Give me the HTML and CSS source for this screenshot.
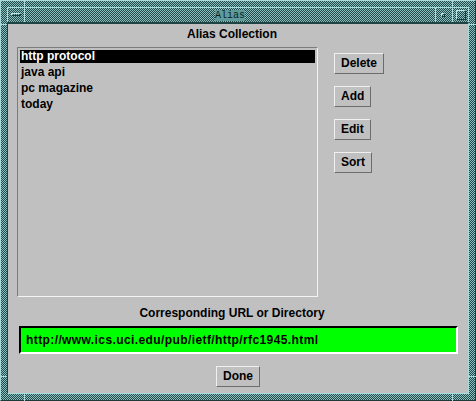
FILE: index.html
```html
<!DOCTYPE html>
<html>
<head>
<meta charset="utf-8">
<title>Alias</title>
<link rel="stylesheet" href="styles.css">
</head>
<body>
<div class="window">
  <div class="titlebar">
    <div class="tb-menu"><span class="menu-glyph"></span></div>
    <div class="tb-title"><span class="title-label">Alias</span></div>
    <div class="tb-min"><span class="min-glyph"></span></div>
    <div class="tb-max"><span class="max-glyph"></span></div>
  </div>
  <div class="client">
    <div class="heading">Alias Collection</div>
    <div class="main">
      <div class="list">
        <div class="item selected">http protocol</div>
        <div class="item">java api</div>
        <div class="item">pc magazine</div>
        <div class="item">today</div>
      </div>
      <div class="buttons">
        <button class="btn">Delete</button>
        <button class="btn">Add</button>
        <button class="btn">Edit</button>
        <button class="btn">Sort</button>
      </div>
    </div>
    <div class="heading url-heading">Corresponding URL or Directory</div>
    <div class="field">http://www.ics.uci.edu/pub/ietf/http/rfc1945.html</div>
    <div class="footer"><button class="btn">Done</button></div>
  </div>
  <span class="tick tick-v tl-v"></span>
  <span class="tick tick-v tr-v"></span>
  <span class="tick tick-h tl-h"></span>
  <span class="tick tick-h tr-h"></span>
  <span class="tick tick-v bl-v"></span>
  <span class="tick tick-v br-v"></span>
  <span class="tick tick-h bl-h"></span>
  <span class="tick tick-h br-h"></span>
</div>
</body>
</html>
```
FILE: styles.css
```css
html, body {
  margin: 0;
  padding: 0;
  background: #c0c0c0;
}

.window {
  position: relative;
  box-sizing: border-box;
  width: 476px;
  height: 401px;
  padding: 6px;
  border-top: 1px solid #a8dcdc;
  border-left: 1px solid #a8dcdc;
  border-right: 1px solid #1c3c3c;
  border-bottom: 1px solid #1c3c3c;
  background-color: #4f8080;
  background-image: repeating-conic-gradient(#21494a 0% 25%, #8cc0c0 0% 50%);
  background-size: 2px 2px;
  display: flex;
  flex-direction: column;
}

/* ---------- title bar ---------- */
.titlebar {
  height: 15px;
  display: flex;
  box-sizing: border-box;
  border-top: 1px solid #a8dcdc;
}

.tb-menu, .tb-title, .tb-min, .tb-max {
  box-sizing: border-box;
  border-left: 1px solid #a8dcdc;
  position: relative;
}

.tb-menu { width: 17px; }
.tb-title {
  flex: 1;
  display: flex;
  justify-content: center;
  align-items: center;
}
.tb-min { width: 17px; }
.tb-max { width: 17px; border-right: 1px solid #a8dcdc; }

.menu-glyph {
  position: absolute;
  left: 3px;
  top: 5px;
  width: 10px;
  height: 3px;
  box-sizing: border-box;
  border-top: 1px solid #b8e8e8;
  border-left: 1px solid #b8e8e8;
  border-right: 1px solid #1c3c3c;
  border-bottom: 1px solid #1c3c3c;
}

.min-glyph {
  position: absolute;
  left: 5px;
  top: 5px;
  width: 4px;
  height: 4px;
  box-sizing: border-box;
  border-top: 1px solid #b8e8e8;
  border-left: 1px solid #b8e8e8;
  border-right: 1px solid #1c3c3c;
  border-bottom: 1px solid #1c3c3c;
}

.max-glyph {
  position: absolute;
  left: 3px;
  top: 2px;
  width: 10px;
  height: 10px;
  box-sizing: border-box;
  border-top: 1px solid #b8e8e8;
  border-left: 1px solid #b8e8e8;
  border-right: 1px solid #1c3c3c;
  border-bottom: 1px solid #1c3c3c;
}

.title-label {
  font-family: "Liberation Mono", "DejaVu Sans Mono", monospace;
  font-size: 10px;
  line-height: 11px;
  height: 11px;
  background: #5e9c9c;
  color: #0c2224;
  margin-top: 1px;
}

/* ---------- client area ---------- */
.client {
  flex: 1;
  box-sizing: border-box;
  background: #c0c0c0;
  border-top: 2px solid #1e4444;
  border-left: 1px solid #1e4444;
  border-right: 1px solid #a8dcdc;
  border-bottom: 1px solid #a8dcdc;
  font-family: "Liberation Sans", Arial, sans-serif;
  font-weight: bold;
  font-size: 12px;
  color: #000;
  display: flex;
  flex-direction: column;
}

.heading {
  text-align: center;
  line-height: 14px;
  padding-top: 3px;
  padding-right: 12px;
}

.main {
  display: flex;
  margin-top: 6px;
  padding-left: 9px;
}

.list {
  box-sizing: border-box;
  width: 301px;
  height: 250px;
  padding: 2px;
  border-top: 1px solid #7c7c7c;
  border-left: 1px solid #7c7c7c;
  border-right: 1px solid #f4f4f4;
  border-bottom: 1px solid #f4f4f4;
  display: flex;
  flex-direction: column;
  gap: 3px;
}

.item {
  height: 13px;
  line-height: 13px;
  padding-left: 1px;
  white-space: nowrap;
}

.item.selected {
  background: #000;
  color: #fff;
}

.buttons {
  display: flex;
  flex-direction: column;
  align-items: flex-start;
  gap: 12px;
  margin-top: 6px;
  margin-left: 16px;
}

.btn {
  box-sizing: border-box;
  height: 21px;
  padding: 0 6px;
  margin: 0;
  font: inherit;
  color: #000;
  background: #c0c0c0;
  border-top: 1px solid #f0f0f0;
  border-left: 1px solid #f0f0f0;
  border-right: 1px solid #6c6c6c;
  border-bottom: 1px solid #6c6c6c;
  border-radius: 0;
  line-height: 19px;
}

.url-heading {
  margin-top: 6px;
}

.field {
  box-sizing: border-box;
  margin: 6px 10px 0 11px;
  height: 28px;
  padding: 0 0 0 5px;
  background: #00ff00;
  border-top: 2px solid #000;
  border-left: 2px solid #000;
  border-right: 2px solid #fff;
  border-bottom: 2px solid #fff;
  line-height: 24px;
  letter-spacing: 0.4px;
  white-space: nowrap;
}

.footer {
  display: flex;
  justify-content: center;
  margin-top: 12px;
}

/* ---------- resize corner ticks ---------- */
.tick {
  position: absolute;
  background: #a8dcdc;
}
.tick-v { width: 1px; height: 7px; }
.tick-h { height: 1px; width: 7px; }
.tl-v { left: 23px; top: -1px; }
.tr-v { left: 451px; top: -1px; }
.tl-h { left: -1px; top: 23px; }
.tr-h { right: -1px; top: 23px; }
.bl-v { left: 23px; bottom: -1px; }
.br-v { left: 451px; bottom: -1px; }
.bl-h { left: -1px; bottom: 23px; }
.br-h { right: -1px; bottom: 23px; }
```
